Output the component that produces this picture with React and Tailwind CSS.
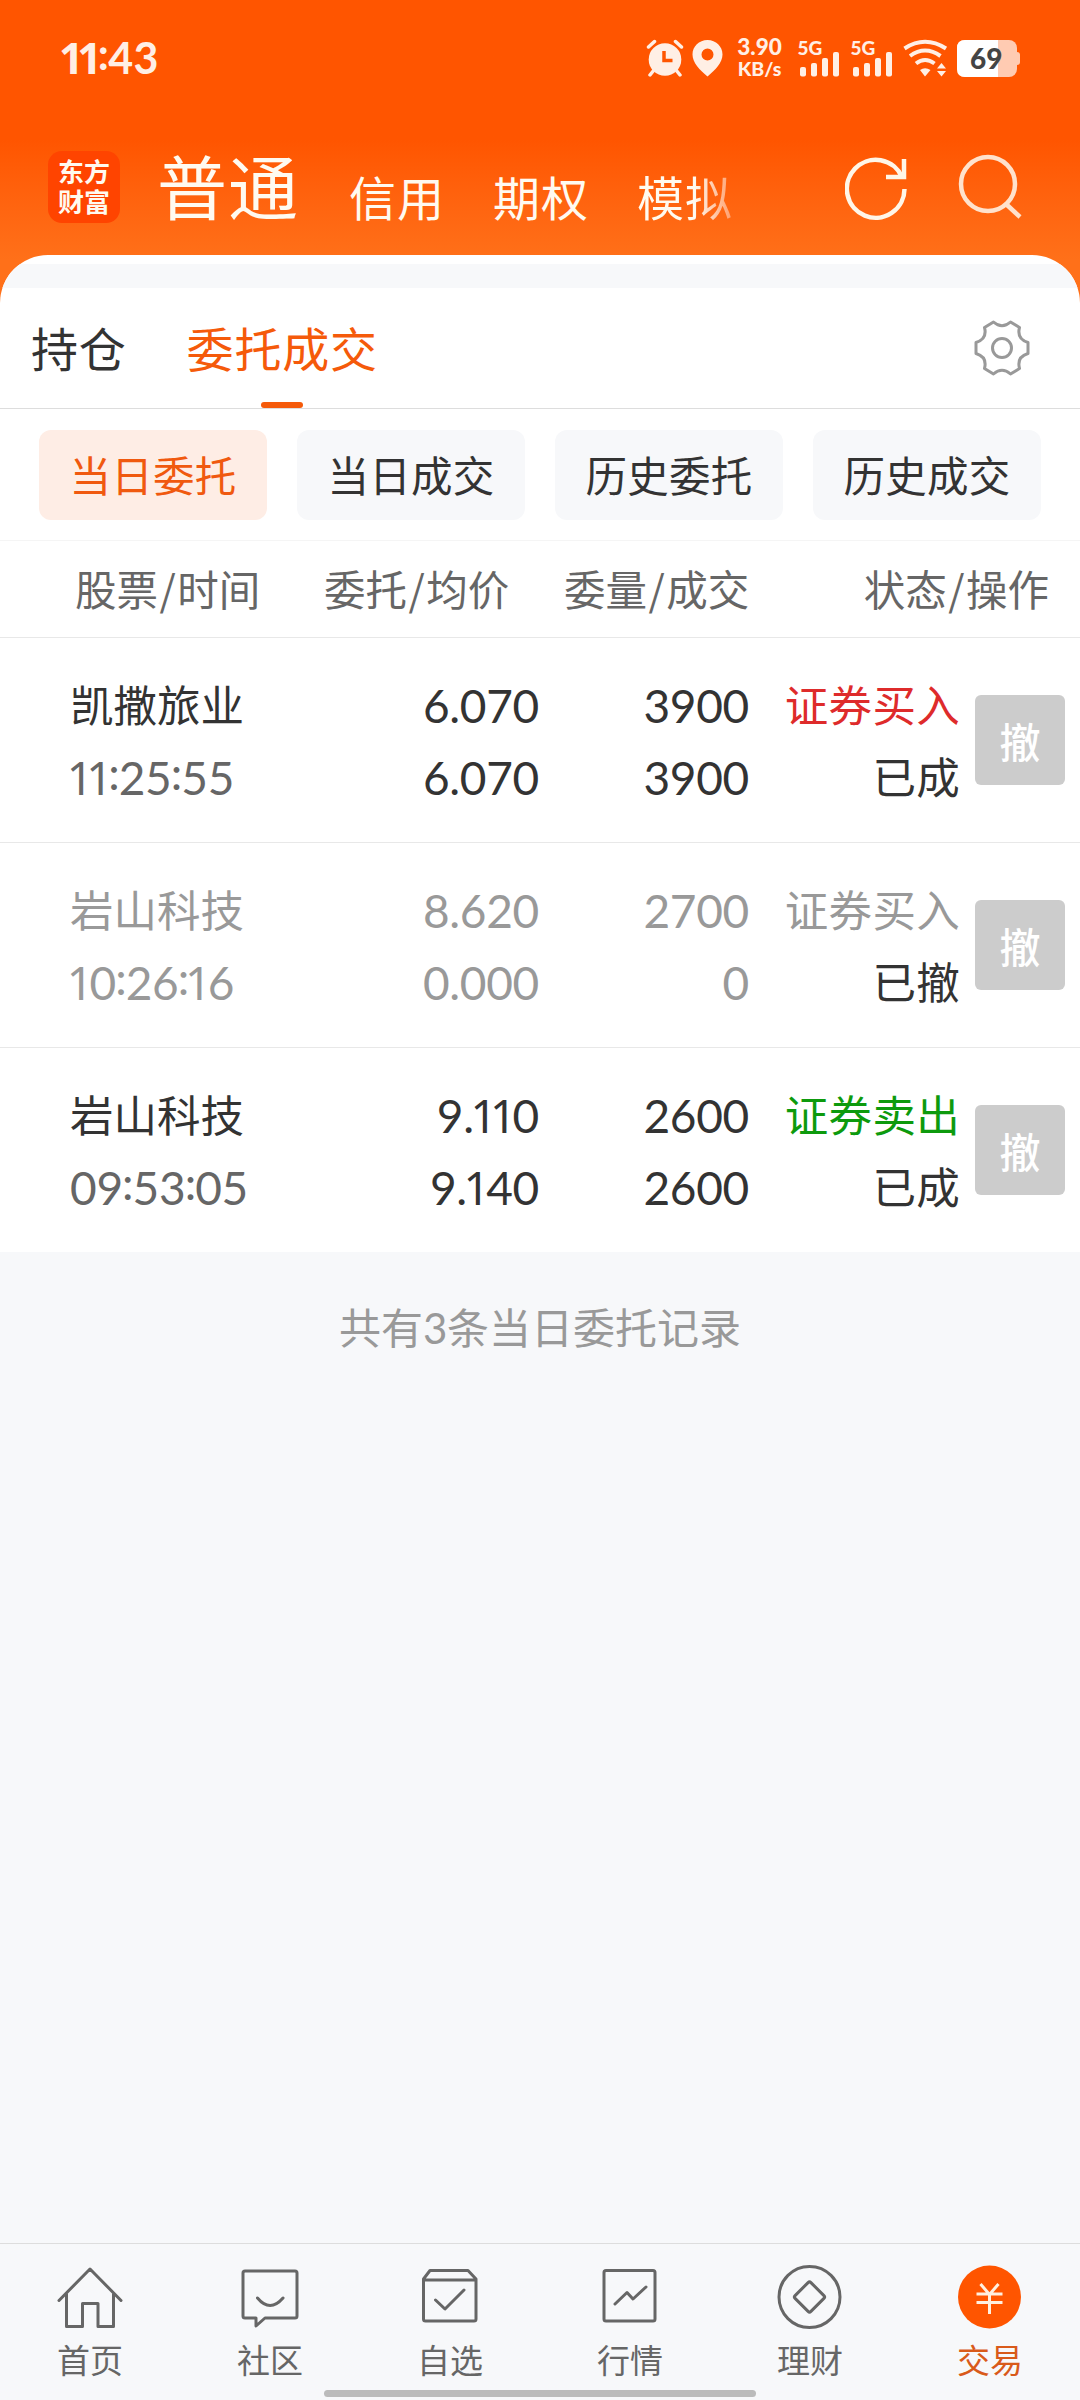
/* Numerals with a plain, narrower "1" and a vertically centred colon. */
function Num({ children, className = "" }) {
  return (
    <span className={`whitespace-nowrap font-["Lato","Noto_Sans_CJK_SC",sans-serif] tracking-[-0.3px] ${className}`}>
      {children.split(/([1:])/).map((p, i) => {
        if (p === "1") {
          return (
            <span key={i} className="ml-[-0.07em] font-['Noto_Sans',sans-serif] leading-none tracking-[-0.08em]">1</span>
          );
        }
        if (p === ":") {
          return <span key={i} className="relative top-[-0.09em] mx-[-0.015em] leading-none">:</span>;
        }
        return p;
      })}
    </span>
  );
}

function Signal() {
  return (
    <svg width="44" height="40" viewBox="0 0 44 40" fill="#ffefe5">
      <text x="0.500" y="16.500" fontFamily="Lato" fontWeight="900" fontSize="19">5G</text>
      <rect x="3" y="29" width="6" height="9.500" rx="2" />
      <rect x="14" y="25" width="6" height="13.500" rx="2" />
      <rect x="25" y="20" width="6" height="18.500" rx="2" />
      <rect x="36" y="14" width="6" height="24.500" rx="2" />
    </svg>
  );
}

function StatusBar() {
  return (
    <div className="flex h-[116px] items-center px-[60px]">
      <Num className="mb-[2px] ml-[2px] text-[43px] font-bold leading-none tracking-[0.2px] text-[#ffefe5]">11:43</Num>
      <div className="ml-auto flex items-center">
        <svg width="38" height="38" viewBox="0 0 38 38" fill="none" stroke="#ffefe5">
          <circle cx="19" cy="20.500" r="16.300" fill="#ffefe5" stroke="none" />
          <path d="M2.500 8 L8.500 2.500 M29.500 2.500 L35.500 8 M8 31 L4 36 M30 31 L34 36" strokeWidth="3.500" strokeLinecap="round" />
          <path d="M18 12 V21.500 H26.500" stroke="#ff5500" strokeWidth="3.500" />
        </svg>
        <svg className="ml-[8px]" width="31" height="38" viewBox="0 0 31 38" fill="#ffefe5">
          <path fillRule="evenodd" d="M15.500 1 C7 1 .5 7.500 .5 15.500 C.5 24 8 31 15.500 37.500 C23 31 30.500 24 30.500 15.500 C30.500 7.500 24 1 15.500 1 Z M15.500 9.500 a6 6 0 1 1 0 12 a6 6 0 1 1 0 -12 Z" />
        </svg>
        <div className={`mb-[2px] ml-[12px] flex w-[49px] flex-col items-center font-["Lato",sans-serif] font-black text-[#ffefe5]`}>
          <span className="text-[22.5px] leading-[23px]">3.90</span>
          <span className="text-[19.5px] leading-[22px]">KB/s</span>
        </div>
        <div className="ml-[13px] flex gap-[9px]"><Signal /><Signal /></div>
        <svg className="ml-[9px]" width="46" height="38" viewBox="0 0 46 38" fill="none" stroke="#ffefe5" strokeWidth="4">
          <path d="M1.500 9.500 Q22 -4 43 9.500" />
          <path d="M7 17 Q22 6 37.500 17" />
          <path d="M13 24.500 Q22 17.500 31.500 24.500" />
          <path d="M17 31 Q22 27.500 27.500 31 L22 37.500 Z M34 29.500 L38.500 24 L43 29.500 Z M34 32 L38.500 37.500 L43 32 Z" fill="#ffefe5" stroke="none" />
        </svg>
        <div className="relative ml-[8px] h-[37px] w-[63px]">
          <svg width="63" height="37" viewBox="0 0 63 37">
            <path d="M59 12 h1 q3 0 3 3 v7 q0 3 -3 3 h-1 Z" fill="#ffcbb2" />
            <rect width="60" height="37" rx="8" fill="#ffcbb2" />
            <path d="M8 0 H41 V37 H8 Q0 37 0 29 V8 Q0 0 8 0 Z" fill="#fff" />
          </svg>
          <span className={`absolute inset-y-0 left-[13px] font-["Lato",sans-serif] text-[28px] font-black leading-[37px] text-[#444]`}>69</span>
        </div>
      </div>
    </div>
  );
}

function Header() {
  return (
    <div className="flex h-[139px] text-[#fffaf0]">
      <div className={`ml-[48px] mt-[35px] flex h-[72px] w-[72px] shrink-0 flex-col items-center justify-center rounded-[14px] bg-[#ff4400] pb-[2px] font-["Noto_Sans_CJK_SC",sans-serif] text-[26px] font-bold leading-[30px]`}>
        <span>东方</span>
        <span>财富</span>
      </div>
      <div className="ml-[37px] mt-[-3px] flex h-[116px] items-baseline tracking-[1px]">
        <span className="text-[70px] leading-[144px]">普通</span>
        <span className="relative top-px ml-[50px] text-[47px]">信用</span>
        <span className="relative top-px ml-[48px] text-[47px]">期权</span>
        <span className="relative top-px ml-[48px] bg-linear-to-r from-[#fffaf0] from-60% to-[#ff9a66] bg-clip-text text-[47px] text-transparent">模拟</span>
      </div>
      <svg className="ml-auto mr-[48px] mt-[37px] shrink-0" width="63" height="68" viewBox="0 0 63 68" fill="none" stroke="#fff6e8" strokeWidth="4.500">
        <path d="M59.500 36 A28.800 29 0 1 1 57 24" />
        <path d="M41 24 H59 V6" />
      </svg>
      <svg className="mr-[58px] mt-[37px] shrink-0" width="66" height="68" viewBox="0 0 66 68" fill="none" stroke="#ffe2cc" strokeWidth="4.500">
        <circle cx="32" cy="31" r="27" />
        <path d="M50 51 L64 64" />
      </svg>
    </div>
  );
}

function Gear() {
  return (
    <svg width="56" height="56" viewBox="0 0 56 56" fill="none" stroke="#999" strokeWidth="3" strokeLinejoin="round">
      <path d="M19.500 2 Q28 9.500 36.500 2 L45.500 7.500 Q42.500 19 54 22.500 V33.500 Q42.500 37 45.500 48.500 L36.500 54 Q28 46.500 19.500 54 L10.500 48.500 Q13.500 37 2 33.500 V22.500 Q13.500 19 10.500 7.500 Z" />
      <circle cx="28" cy="28" r="9.500" />
    </svg>
  );
}

const chips = ["当日委托", "当日成交", "历史委托", "历史成交"];

const orders = [
  { name: "凯撒旅业", time: "11:25:55", p: ["6.070", "6.070"], q: ["3900", "3900"], side: "证券买入", state: "已成", main: "text-[#333]", timeColor: "text-[#666]", sideColor: "text-[#de2b2b]" },
  { name: "岩山科技", time: "10:26:16", p: ["8.620", "0.000"], q: ["2700", "0"], side: "证券买入", state: "已撤", main: "text-[#999]", timeColor: "text-[#999]", sideColor: "text-[#999]" },
  { name: "岩山科技", time: "09:53:05", p: ["9.110", "9.140"], q: ["2600", "2600"], side: "证券卖出", state: "已成", main: "text-[#333]", timeColor: "text-[#666]", sideColor: "text-[#0d9a0d]" },
];

function Order({ o }) {
  return (
    <div className="flex h-[205px] items-center border-t border-[#e8e8e8] bg-white pr-[15px] pt-[3px] text-[43.5px] leading-[72px]">
      <div className="ml-[70px] flex w-[250px] flex-col">
        <span className={`-mt-[2px] mb-[2px] ${o.main}`}>{o.name}</span>
        <Num className={`text-[46px] ${o.timeColor}`}>{o.time}</Num>
      </div>
      <div className={`flex w-[219px] flex-col items-end text-[46px] ${o.main}`}>
        <Num>{o.p[0]}</Num>
        <Num>{o.p[1]}</Num>
      </div>
      <div className={`flex w-[210px] flex-col items-end text-[46px] ${o.main}`}>
        <Num>{o.q[0]}</Num>
        <Num>{o.q[1]}</Num>
      </div>
      <div className="ml-auto mr-[15px] flex flex-col items-end whitespace-nowrap pb-[3px] tracking-[0.3px]">
        <span className={o.sideColor}>{o.side}</span>
        <span className="text-[#333]">{o.state}</span>
      </div>
      <div className="mb-[3px] flex h-[90px] w-[90px] shrink-0 items-center justify-center rounded-[6px] bg-[#ccc] pb-[1px] text-[41px] font-medium text-white">撤</div>
    </div>
  );
}

const line = { fill: "none", stroke: "#666", strokeWidth: 3, strokeLinecap: "round", strokeLinejoin: "round" };

const nav = [
  ["首页", <g {...line}><path d="M3 36.500 L34 5 L65 36.500 M10.500 30 V62.500 H26.500 V39.500 H42 V62.500 H57.500 V30" /></g>],
  ["社区", <g {...line}><path d="M9 7 H59 Q61 7 61 9 V52 Q61 54 59 54 H29 L20 62 V54 H9 Q7 54 7 52 V9 Q7 7 9 7 Z M21.500 34 Q34 49 47 34" /></g>],
  ["自选", <g {...line}><path d="M14 6.500 H52 L60 15 V55 Q60 57 58 57 H9.500 Q7.500 57 7.500 55 V15 L14 6.500 Z M7.500 16 H60 M19.500 36 L29 45 L48 26" /></g>],
  ["行情", <g {...line}><rect x="8" y="6.500" width="51" height="50.500" rx="2" /><path d="M19 40 L31 28.500 L37 35 L50 23" /></g>],
  ["理财", <g {...line}><circle cx="33.500" cy="33" r="30.500" /><rect x="22.300" y="21.800" width="22.400" height="22.400" rx="2" transform="rotate(45 33.500 33)" /></g>],
  ["交易", <g><circle cx="33.500" cy="33" r="31.500" fill="#ff5500" /><path d="M24.500 20 L33.500 30.500 L42.500 20 M20.500 30 H46.500 M20.500 38.500 H46.500 M33.500 30 V50" fill="none" stroke="#fff0e0" strokeWidth="3" /></g>],
];

export default function App() {
  return (
    <div className={`flex h-[2400px] w-[1080px] flex-col overflow-hidden bg-[#f7f8fa] font-["Noto_Sans_CJK_SC",sans-serif]`} lang="zh-CN">
      <div className="h-[310px] shrink-0 bg-linear-to-b from-[#ff5500] from-[140px] to-[#ff7019] to-[260px]">
        <StatusBar />
        <Header />
        <div className="h-[55px] overflow-hidden rounded-t-[48px] bg-white pt-[9px]">
          <div className="h-[24px] bg-[#f7f8fa]" />
        </div>
      </div>
      <div className="flex h-[99px] shrink-0 items-stretch border-b border-[#ddd] bg-white pl-[31px] pr-[50px] text-[47px] leading-[74px] tracking-[0.8px]">
        <span className="text-[#333]">持仓</span>
        <div className="ml-[60px] flex flex-col items-center text-[#f55a0a]">
          <span>委托成交</span>
          <div className="mt-auto h-[6px] w-[42px] rounded-full bg-[#f55a0a]" />
        </div>
        <div className="ml-auto mt-[10px]"><Gear /></div>
      </div>
      <div className="flex h-[132px] shrink-0 gap-[30px] border-b border-[#f5f5f5] bg-white px-[39px] pt-[21px]">
        {chips.map((c, i) => (
          <div key={c} className={`flex h-[90px] w-[228px] items-center justify-center rounded-[12px] text-[41.5px] leading-none tracking-[0.3px] ${i === 0 ? "bg-[#feede5] text-[#f0590f]" : "bg-[#f7f8fa] text-[#333]"}`}>{c}</div>
        ))}
      </div>
      <div className="flex h-[96px] shrink-0 items-center bg-white pl-[75px] pr-[31px] text-[41.5px] leading-none text-[#666]">
        {[["股票", "时间", "w-[249px]"], ["委托", "均价", "w-[240px]"], ["委量", "成交", "w-[240px]"], ["状态", "操作", "ml-auto"]].map(([a, b, w]) => (
          <span key={a} className={`whitespace-nowrap ${w}`}>{a}<span className="mx-[1.500px]">/</span>{b}</span>
        ))}
      </div>
      {orders.map((o, i) => <Order key={i} o={o} />)}
      <div className="pt-[44px] text-center text-[42px] leading-[60px] text-[#999]">共有<Num>3</Num>条当日委托记录</div>
      <div className="mt-auto flex h-[157px] shrink-0 flex-col border-t border-[#ddd] bg-[#f7f8fa]">
        <div className="grid grid-cols-6">
          {nav.map(([label, icon], i) => (
            <div key={label} className="flex flex-col items-center pt-[20px]">
              <svg width="68" height="68" viewBox="0 0 68 68">{icon}</svg>
              <span className={`mt-[5px] text-[33px] leading-[44px] ${i === 5 ? "text-[#d95a1a]" : "text-[#666]"}`}>{label}</span>
            </div>
          ))}
        </div>
        <div className="mx-auto mt-auto mb-[3px] h-[7px] w-[432px] shrink-0 rounded-full bg-[#bbb]" />
      </div>
    </div>
  );
}
